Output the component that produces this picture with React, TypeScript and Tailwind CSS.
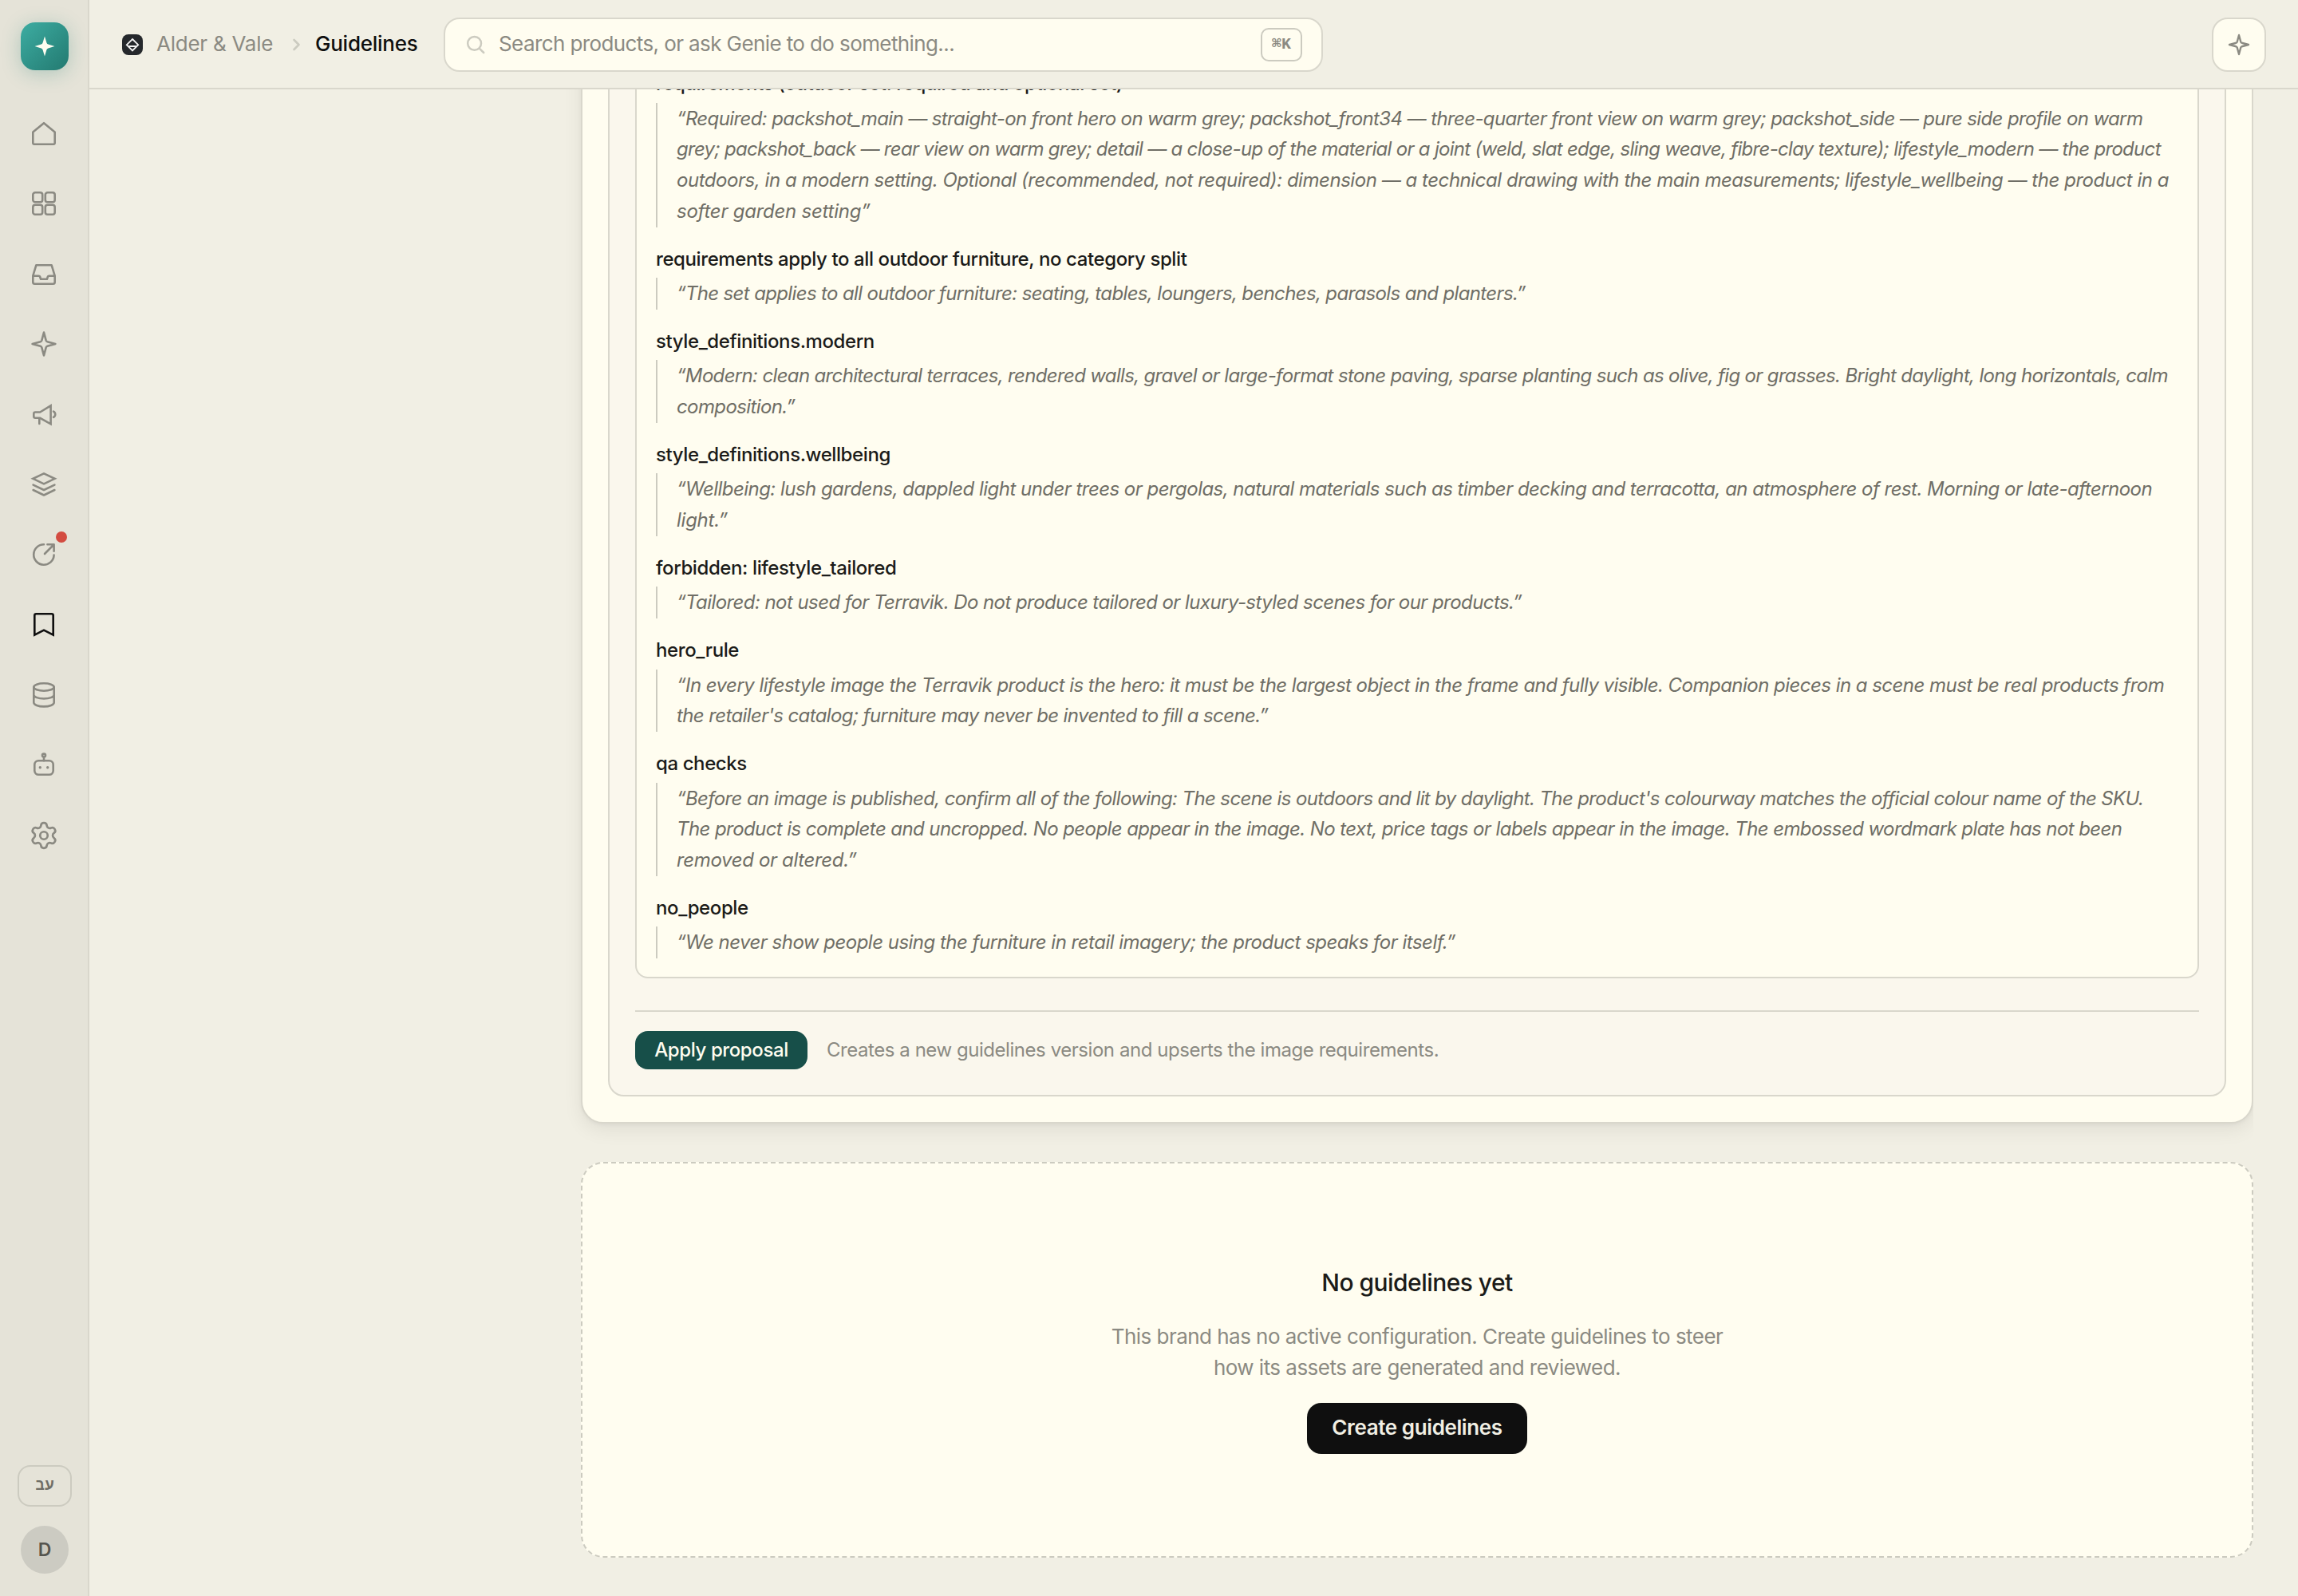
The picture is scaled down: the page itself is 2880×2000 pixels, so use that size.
import React from 'react';
import { Settings } from 'lucide-react';

const evidence = [
  {
    title: 'requirements (outdoor set: required and optional set)',
    lines: [
      { text: '“Required: packshot_main — straight-on front hero on warm grey; packshot_front34 — three-quarter front view on warm grey; packshot_side — pure side profile on warm', tracking: 'tracking-[-0.62px]' },
      { text: 'grey; packshot_back — rear view on warm grey; detail — a close-up of the material or a joint (weld, slat edge, sling weave, fibre-clay texture); lifestyle_modern — the product', tracking: 'tracking-[-0.7px]' },
      { text: 'outdoors, in a modern setting. Optional (recommended, not required): dimension — a technical drawing with the main measurements; lifestyle_wellbeing — the product in a', tracking: 'tracking-[-0.46px]' },
      { text: 'softer garden setting”', tracking: 'tracking-[-0.25px]' },
    ],
  },
  {
    title: 'requirements apply to all outdoor furniture, no category split',
    lines: [
      { text: '“The set applies to all outdoor furniture: seating, tables, loungers, benches, parasols and planters.”', tracking: 'tracking-[-0.64px]' },
    ],
  },
  {
    title: 'style_definitions.modern',
    lines: [
      { text: '“Modern: clean architectural terraces, rendered walls, gravel or large-format stone paving, sparse planting such as olive, fig or grasses. Bright daylight, long horizontals, calm', tracking: 'tracking-[-0.66px]' },
      { text: 'composition.”', tracking: 'tracking-[-0.61px]' },
    ],
  },
  {
    title: 'style_definitions.wellbeing',
    lines: [
      { text: '“Wellbeing: lush gardens, dappled light under trees or pergolas, natural materials such as timber decking and terracotta, an atmosphere of rest. Morning or late-afternoon', tracking: 'tracking-[-0.53px]' },
      { text: 'light.”', tracking: 'tracking-[-0.25px]' },
    ],
  },
  {
    title: 'forbidden: lifestyle_tailored',
    lines: [
      { text: '“Tailored: not used for Terravik. Do not produce tailored or luxury-styled scenes for our products.”', tracking: 'tracking-[-0.57px]' },
    ],
  },
  {
    title: 'hero_rule',
    lines: [
      { text: '“In every lifestyle image the Terravik product is the hero: it must be the largest object in the frame and fully visible. Companion pieces in a scene must be real products from', tracking: 'tracking-[-0.53px]' },
      { text: "the retailer's catalog; furniture may never be invented to fill a scene.”", tracking: 'tracking-[-0.61px]' },
    ],
  },
  {
    title: 'qa checks',
    lines: [
      { text: "“Before an image is published, confirm all of the following: The scene is outdoors and lit by daylight. The product's colourway matches the official colour name of the SKU.", tracking: 'tracking-[-0.62px]' },
      { text: 'The product is complete and uncropped. No people appear in the image. No text, price tags or labels appear in the image. The embossed wordmark plate has not been', tracking: 'tracking-[-0.58px]' },
      { text: 'removed or altered.”', tracking: 'tracking-[-0.35px]' },
    ],
  },
  {
    title: 'no_people',
    lines: [
      { text: '“We never show people using the furniture in retail imagery; the product speaks for itself.”', tracking: 'tracking-[-0.51px]' },
    ],
  },
];

const SPARKLE = 'M18 3.6 20.7 13.6Q21.1 14.9 22.4 15.3L32.4 18 22.4 20.7Q21.1 21.1 20.7 22.4L18 32.4 15.3 22.4Q14.9 21.1 13.6 20.7L3.6 18 13.6 15.3Q14.9 14.9 15.3 13.6Z';

const nav = [
  { id: 'home', icon: <path d="M4.3 16.4 18 5.2 31.7 16.4V30.2a1.5 1.5 0 0 1-1.5 1.5H5.8a1.5 1.5 0 0 1-1.5-1.5Z" /> },
  {
    id: 'products',
    icon: (
      <>
        <rect x="4.3" y="4.3" width="11.9" height="11.9" rx="2.8" />
        <rect x="19.8" y="4.3" width="11.9" height="11.9" rx="2.8" />
        <rect x="4.3" y="19.8" width="11.9" height="11.9" rx="2.8" />
        <rect x="19.8" y="19.8" width="11.9" height="11.9" rx="2.8" />
      </>
    ),
  },
  {
    id: 'inbox',
    icon: (
      <path d="M4.3 20.7H11.6Q12.8 20.7 13.2 22L14.1 24.8H21.9L22.8 22Q23.2 20.7 24.4 20.7H31.7M4.3 20.7 8.4 7.2H27.6L31.7 20.7V28.5a2.2 2.2 0 0 1-2.2 2.2h-23a2.2 2.2 0 0 1-2.2-2.2Z" />
    ),
  },
  { id: 'genie', icon: <path d={SPARKLE} /> },
  {
    id: 'campaigns',
    icon: (
      <>
        <path d="M13.2 15.5 26.6 7.3V30.3L13.2 22.8H7.3a2 2 0 0 1-2-2V17.5a2 2 0 0 1 2-2Z" strokeLinejoin="miter" />
        <path d="M12.3 23.2V30M30 14.6a4 4 0 0 1 0 7.2" />
      </>
    ),
  },
  {
    id: 'layers',
    icon: (
      <>
        <path d="M18 4.4 31.6 10.8 18 17.3 4.4 10.8Z" strokeLinejoin="miter" />
        <path d="M4.6 18.6 18 25 31.4 18.6M4.6 25 18 31.5 31.4 25" />
      </>
    ),
  },
  {
    id: 'publish',
    dot: true,
    icon: <path d="M18 5.3A12.7 12.7 0 1 0 30.6 18.6M22.4 5.3H30.6V13.8M30.4 5.5 19 17" />,
  },
  {
    id: 'guidelines',
    active: true,
    icon: <path d="M6.3 30.6V6.3a2 2 0 0 1 2-2H27.7a2 2 0 0 1 2 2V30.6L18 24.6Z" strokeLinejoin="miter" />,
  },
  {
    id: 'data',
    icon: (
      <>
        <ellipse cx="18" cy="8" rx="12.7" ry="4.7" />
        <path d="M5.3 8V27.6C5.3 30.2 11 32.4 18 32.4S30.7 30.2 30.7 27.6V8M5.3 17.8C5.3 20.4 11 22.5 18 22.5S30.7 20.4 30.7 17.8" />
      </>
    ),
  },
  {
    id: 'agents',
    icon: (
      <>
        <circle cx="18" cy="5.6" r="2" />
        <rect x="6.3" y="12.3" width="23.4" height="17.4" rx="5" />
        <path d="M18 7.6V12.3" />
        <circle cx="13.3" cy="20.8" r="1.7" fill="currentColor" stroke="none" />
        <circle cx="22.7" cy="20.8" r="1.7" fill="currentColor" stroke="none" />
      </>
    ),
  },
];

function Sidebar() {
  return (
    <aside className="flex w-28 shrink-0 flex-col items-center border-r-2 border-[#d9d7cc] bg-[#e5e3d8] pt-7 pb-7">
      <div className="ml-0.5 flex size-[60px] items-center justify-center rounded-[18px] bg-linear-135 from-[#3dada2] to-[#237a71] shadow-[0_4px_24px_rgba(36,125,116,0.28)]">
        <svg width="28" height="28" viewBox="0 0 36 36" fill="#fffdf0">
          <path d="M18 2 21.2 12.4Q21.8 14.2 23.6 14.8L34 18 23.6 21.2Q21.8 21.8 21.2 23.6L18 34 14.8 23.6Q14.2 21.8 12.4 21.2L2 18 12.4 14.8Q14.2 14.2 14.8 12.4Z" />
        </svg>
      </div>
      <nav className="mt-[35px] flex flex-col">
        {nav.map((item) => (
          <a
            key={item.id}
            className={`relative flex size-[88px] items-center justify-center ${item.active ? 'text-[#0f0f0f]' : 'text-[#8b8a82]'}`}
          >
            <svg
              width="36"
              height="36"
              viewBox="0 0 36 36"
              fill="none"
              stroke="currentColor"
              strokeWidth="2.6"
              strokeLinecap="round"
              strokeLinejoin="round"
            >
              {item.icon}
            </svg>
            {item.dot && <span className="absolute top-[15px] right-[15px] size-3.5 rounded-full bg-[#d34c41]" />}
          </a>
        ))}
        <a className="flex size-[88px] items-center justify-center text-[#8b8a82]">
          <Settings size={38} strokeWidth={1.7} />
        </a>
      </nav>
      <div className="mt-auto flex flex-col items-center gap-6 pl-0.5">
        <button className="flex h-[52px] w-[68px] items-center justify-center rounded-2xl border-2 border-[#cccbc0] font-['Liberation_Mono',monospace] text-[19px] font-bold text-[#6f6e66]">
          עב
        </button>
        <div className="flex size-[60px] items-center justify-center rounded-full bg-[#cccbc2] text-[23px] font-semibold text-[#55544e]">
          D
        </div>
      </div>
    </aside>
  );
}

function Header() {
  return (
    <header className="flex h-28 shrink-0 items-start border-b-2 border-[#d9d7cc] bg-[#f1efe4] pt-[22px] pr-10 pl-[41px]">
      <div className="flex h-[68px] w-[403px] items-center text-[26px] whitespace-nowrap">
        <svg width="26" height="26" viewBox="0 0 26 26" fill="none" stroke="#f4f4f4" strokeWidth="1.8">
          <rect width="26" height="26" rx="8" fill="#25282c" stroke="none" />
          <path d="M13 6 20.2 13.2 13 20.4 5.8 13.2ZM8.6 15H17.4" />
        </svg>
        <span className="ml-[17px] w-[170px] pb-[3px] tracking-[-0.25px] text-[#8b8a82]">Alder &amp; Vale</span>
        <svg width="12" height="18" viewBox="0 0 12 18" fill="none" stroke="#cccbc0" strokeWidth="2.6" strokeLinecap="round" strokeLinejoin="round">
          <path d="m2.5 3 6 6-6 6" />
        </svg>
        <span className="ml-[17px] pb-[3px] font-medium tracking-[-0.25px] text-[#0f0f0f]">Guidelines</span>
      </div>
      <div className="flex h-[68px] w-[1102px] items-center rounded-[20px] border-2 border-[#d9d7cc] bg-[#fffdf0] pr-6 pl-[25px]">
        <svg width="26" height="26" viewBox="0 0 26 26" fill="none" stroke="#cccbc0" strokeWidth="2.5" strokeLinecap="round">
          <circle cx="11.6" cy="11.4" r="8.4" />
          <path d="m18 17.8 5.2 5.2" />
        </svg>
        <span className="ml-4 pb-[3px] text-[26px] tracking-[-0.6px] text-[#8b8a82]">
          Search products, or ask Genie to do something...
        </span>
        <kbd className="ml-auto flex h-[42px] w-[52px] items-center justify-center rounded-[10px] border-2 border-[#cccbc0] font-['Liberation_Mono','DejaVu_Sans_Mono',monospace] text-[20px] font-bold text-[#8b8a82]">
          ⌘K
        </kbd>
      </div>
      <button className="ml-auto flex size-[68px] items-center justify-center rounded-[20px] border-2 border-[#d9d7cc] bg-[#fffdf0] text-[#8b8a82]">
        <svg width="30" height="30" viewBox="0 0 36 36" fill="none" stroke="currentColor" strokeWidth="2.8" strokeLinejoin="round">
          <path d={SPARKLE} />
        </svg>
      </button>
    </header>
  );
}

function Evidence() {
  return (
    <div className="flex flex-col gap-5 rounded-2xl border-2 border-[#d9d7cc] bg-[#fffdf0] px-6 pb-6 text-[24px]">
      {evidence.map((item) => (
        <div key={item.title} className="whitespace-nowrap">
          <h4 className="h-[38.5px] leading-[41px] font-medium tracking-[-0.4px] text-[#1b1b19]">{item.title}</h4>
          <blockquote className="mt-1.5 -mb-px border-l-2 border-[#cccbc0] pt-px pl-6 leading-[38.75px] text-[#6f6e66] italic">
            {item.lines.map((line) => (
              <p key={line.text} className={line.tracking}>
                {line.text}
              </p>
            ))}
          </blockquote>
        </div>
      ))}
    </div>
  );
}

export default function App() {
  return (
    <div className="flex h-[2000px] w-[2880px] overflow-hidden bg-[#f1efe4] font-['Inter',sans-serif]">
      <Sidebar />
      <div className="flex min-w-0 flex-1 flex-col">
        <Header />
        {/* scrolled to the end, so the column is anchored to the bottom */}
        <main className="mr-14 ml-[560px] flex min-h-0 flex-1 flex-col justify-end overflow-hidden pb-12 pl-14">
          <section className="rounded-[28px] border-2 border-[#d9d7cc] bg-[#fffdf0] p-8 shadow-[0_2px_4px_rgba(15,15,15,0.04),0_8px_24px_rgba(15,15,15,0.07)]">
            <div className="rounded-[20px] border-2 border-[#d9d7cc] bg-[#faf7ed] p-8">
              <Evidence />
              <div className="mt-10 flex items-center gap-6 border-t-2 border-[#d9d7cc] pt-6 whitespace-nowrap">
                <button className="h-12 w-[216px] rounded-2xl bg-[#174f49] text-[24px] font-medium tracking-[-0.4px] text-[#fffdf0]">
                  Apply proposal
                </button>
                <span className="text-[24px] tracking-[-0.45px] text-[#8b8a82]">
                  Creates a new guidelines version and upserts the image requirements.
                </span>
              </div>
            </div>
          </section>
          <section className="mt-12 flex h-[496px] shrink-0 flex-col items-center rounded-[28px] border-2 border-dashed border-[#cccbc0] bg-[#fffdf0] pt-[128px] text-center">
            <h3 className="h-[42px] text-[30px] leading-[42px] font-medium tracking-[-0.55px] text-[#1b1b19]">No guidelines yet</h3>
            <p className="mt-7 text-[26px] leading-[38.5px] tracking-[-0.53px] whitespace-nowrap text-[#8b8a82]">
              This brand has no active configuration. Create guidelines to steer
              <br />
              how its assets are generated and reviewed.
            </p>
            <button className="mt-[25px] h-16 w-[276px] rounded-[18px] bg-[#0f0f0f] pb-[3px] text-[26px] font-semibold tracking-[-0.4px] text-[#f1efe4]">
              Create guidelines
            </button>
          </section>
        </main>
      </div>
    </div>
  );
}
